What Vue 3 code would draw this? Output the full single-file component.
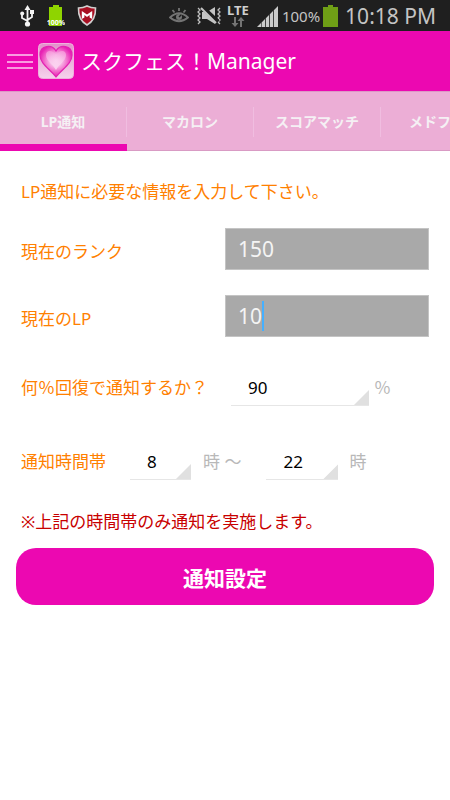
<script setup>
import { ref } from 'vue'

const tabs = ['LP通知', 'マカロン', 'スコアマッチ', 'メドフェス']
const activeTab = ref(0)

const rank = ref('150')
const lp = ref('10')
const percent = ref(90)
const fromHour = ref(8)
const toHour = ref(22)

const percents = [10, 20, 30, 40, 50, 60, 70, 80, 90, 100]
const hours = Array.from({ length: 25 }, (_, i) => i)
</script>

<template>
  <div class="app">
    <!-- status bar -->
    <div class="status">
      <div class="status-group status-left">
        <svg class="icon-usb" width="16" height="22" viewBox="0 0 16 22">
          <g fill="none" stroke="#f4f4f4" stroke-width="1.8">
            <path d="M8.5 4V18M8.5 16L3 13V9M8.5 15L13 12V8" />
          </g>
          <g fill="#f4f4f4">
            <path d="M8.5 0L11.5 5H5.5Z" />
            <circle cx="8.5" cy="19" r="2.6" />
            <circle cx="3.2" cy="8.5" r="2" />
            <rect x="11" y="5" width="4" height="4" />
          </g>
        </svg>
        <svg width="18" height="22" viewBox="0 0 18 22">
          <path d="M6 0H12V2H15V21H2V2H6Z" fill="#8fd400" />
          <text x="9" y="20" class="tiny">100%</text>
        </svg>
        <svg width="20" height="22" viewBox="0 0 20 22">
          <path d="M10 1Q14 3 18.5 3Q19 15 10 20Q1 15 1.5 3Q6 3 10 1Z" fill="#a80f22" stroke="#d0d0d0" stroke-width="1.6" />
          <path d="M4.8 14V6L10 9.5L15.2 6V14L12.6 12.5V10L10 12L7.4 10V12.5Z" fill="#fff" />
        </svg>
      </div>
      <div class="status-group status-right">
        <svg width="20" height="20" viewBox="0 0 20 20" fill="none" stroke="#747474" stroke-width="1.8">
          <path d="M1 11.5Q10 3 19 11.5Q10 19 1 11.5Z" />
          <circle cx="10" cy="11" r="3" fill="#747474" stroke="none" />
          <path d="M10 11L12 9" stroke="#1f1f1f" stroke-width="1.4" />
          <path d="M10 2V5M3.5 4L5.5 6.5M16.5 4L14.5 6.5" />
        </svg>
        <svg class="icon-mute" width="26" height="20" viewBox="0 0 26 20">
          <path d="M2 2L4 4L2 6L4 8L2 10L4 12L2 14L4 16L2 18M24 2L22 4L24 6L22 8L24 10L22 12L24 14L22 16L24 18" fill="none" stroke="#bdbdbd" stroke-width="1.3" />
          <path d="M6 6H11L19 1V18L11 13H6Z" fill="#c4c4c4" />
          <path d="M5 0L22 16" stroke="#1f1f1f" stroke-width="4.5" />
          <path d="M5 2L20 17" stroke="#c4c4c4" stroke-width="2" />
        </svg>
        <div class="network">
          <span class="lte">LTE</span>
          <svg width="14" height="10" viewBox="0 0 14 10" fill="#747474">
            <path d="M3 0H5V6H7.5L4 10L0.5 6H3ZM9 10H11V4H13.5L10 0L6.5 4H9Z" />
          </svg>
        </div>
        <svg class="icon-signal" width="22" height="22" viewBox="0 0 22 22" fill="#cacaca">
          <path d="M0 22L4 18V22ZM4.6 17.4L8 14V22H4.6ZM8.8 13.2L12 10V22H8.8ZM12.8 9.2L16 6V22H12.8ZM16.8 5.2L21 1V22H16.8Z" />
        </svg>
        <span class="charge">100%</span>
        <svg class="icon-battery" width="15" height="22" viewBox="0 0 15 22">
          <path d="M5 0H10V2H15V22H0V2H5Z" fill="#6f9f16" />
        </svg>
        <span class="clock">10:18 PM</span>
      </div>
    </div>

    <!-- header -->
    <header class="header">
      <button class="menu" type="button" aria-label="メニュー">
        <svg width="26" height="17" viewBox="0 0 26 17" fill="#f99ae0">
          <rect y="1" width="26" height="2" />
          <rect y="8" width="26" height="2" />
          <rect y="14" width="26" height="2" />
        </svg>
      </button>
      <svg class="logo" width="36" height="36" viewBox="0 0 36 36">
        <defs>
          <radialGradient id="heart" cx="50%" cy="46%" r="52%">
            <stop offset="0" stop-color="#fde8f8" />
            <stop offset="0.35" stop-color="#f8bce7" />
            <stop offset="0.75" stop-color="#f05cc6" />
            <stop offset="1" stop-color="#e822b4" />
          </radialGradient>
          <linearGradient id="tile" x1="0" y1="0" x2="0" y2="1">
            <stop offset="0" stop-color="#e38fcb" />
            <stop offset="1" stop-color="#f5d3ec" />
          </linearGradient>
          <linearGradient id="shine" x1="0" y1="0" x2="0" y2="1">
            <stop offset="0" stop-color="#f7a3df" />
            <stop offset="1" stop-color="#fdeaf8" />
          </linearGradient>
        </defs>
        <rect x="0.5" y="0.5" width="35" height="35" rx="4" fill="url(#tile)" stroke="#efb0dd" />
        <path d="M18 34C12 26 2 21 2 12C2 2 14 1 18 8C22 1 34 2 34 12C34 21 24 26 18 34Z" fill="url(#heart)" stroke="#e323b2" stroke-width="1.2" />
        <path d="M18 27C15 21 8 18 8 12C8 6 16 7 18 13C20 7 28 6 28 12C28 18 21 21 18 27Z" fill="url(#shine)" fill-opacity="0.7" />
      </svg>
      <h1 class="title">スクフェス！Manager</h1>
    </header>

    <!-- tabs -->
    <nav class="tabs">
      <button
        v-for="(tab, i) in tabs"
        :key="tab"
        type="button"
        class="tab"
        :class="{ 'tab--active': i === activeTab }"
        @click="activeTab = i"
      >
        <span class="tab-label">{{ tab }}</span>
      </button>
    </nav>

    <form class="form" @submit.prevent>
      <p class="intro">LP通知に必要な情報を入力して下さい。</p>

      <div class="row row-text">
        <label for="rank">現在のランク</label>
        <div class="field">
          <input id="rank" v-model="rank" type="text" inputmode="numeric" />
        </div>
      </div>

      <div class="row row-text">
        <label for="lp">現在のLP</label>
        <div class="field">
          <input id="lp" v-model="lp" type="text" inputmode="numeric" />
          <span class="caret"></span>
        </div>
      </div>

      <div class="row row-percent">
        <label for="percent">何％回復で通知するか？</label>
        <div class="spinner spinner-percent">
          <select id="percent" v-model="percent">
            <option v-for="p in percents" :key="p" :value="p">{{ p }}</option>
          </select>
        </div>
        <span class="unit">％</span>
      </div>

      <div class="row row-hours">
        <label for="from">通知時間帯</label>
        <div class="spinner spinner-from">
          <select id="from" v-model="fromHour">
            <option v-for="h in hours" :key="h" :value="h">{{ h }}</option>
          </select>
        </div>
        <label class="unit" for="from">時 ～</label>
        <div class="spinner spinner-to">
          <select id="to" v-model="toHour">
            <option v-for="h in hours" :key="h" :value="h">{{ h }}</option>
          </select>
        </div>
        <label class="unit" for="to">時</label>
      </div>

      <p class="note">※上記の時間帯のみ通知を実施します。</p>

      <button class="submit" type="submit">通知設定</button>
    </form>
  </div>
</template>

<style>
body {
  background: #fff;
}
</style>

<style scoped>
.app {
  overflow: hidden;
  font-family: "Noto Sans", "Noto Sans CJK JP", sans-serif;
  font-size: 17px;
  line-height: 22px;
}

button,
input,
select {
  font-family: inherit;
  margin: 0;
  border: 0;
}

/* status bar */
.status {
  display: flex;
  justify-content: space-between;
  height: 31px;
  padding: 0 14px 0 19px;
  background: #1f1f1f;
}

.status-group {
  display: flex;
  align-items: center;
}

.status-left {
  gap: 12px;
}

.tiny {
  font-size: 7px;
  font-weight: 700;
  fill: #fff;
  text-anchor: middle;
}

.icon-mute {
  margin-left: 7px;
}

.network {
  display: flex;
  flex-direction: column;
  align-items: center;
  margin: 0 8px 0 5px;
}

.lte {
  color: #cfcfcf;
  font-size: 13px;
  font-weight: 700;
  line-height: 13px;
}

.charge {
  margin: 0 3px;
  color: #c4c4c4;
  font-size: 15px;
}

.clock {
  margin-left: 7px;
  color: #c4c4c4;
  font-size: 21px;
}

/* header */
.header {
  display: flex;
  align-items: center;
  height: 60px;
  padding: 0 7px;
  background: #ec08b1;
}

.menu {
  display: flex;
  padding: 0;
  background: none;
}

.logo {
  margin: 0 7px 0 5px;
}

.title {
  margin: 0;
  color: #fff;
  font-size: 21px;
  font-weight: 400;
  line-height: 28px;
}

/* tabs */
.tabs {
  display: flex;
  height: 60px;
  box-sizing: border-box;
  overflow: hidden;
  background: #ecaed6;
  border-top: 1px solid #dc98c5;
  box-shadow: inset 0 -1px #d99bc4;
}

.tab {
  display: flex;
  flex: 0 0 127px;
  align-items: center;
  padding: 0;
  background: none;
  color: #f5f0f4;
  font-size: 14px;
  font-weight: 700;
}

.tab-label {
  flex: 1;
  line-height: 30px;
  border-right: 1px solid #f0bde0;
}

.tab--active {
  box-shadow: inset 0 -7px #ec08b1;
}

/* form */
.form {
  padding: 30px 21px 0;
}

.intro,
.row label {
  color: #ff8000;
}

.intro,
.note {
  margin: 0;
}

.row {
  display: flex;
  align-items: center;
}

.row-text {
  height: 42px;
  margin-top: 25px;
}

.row-text label {
  flex: 1;
  padding-top: 6px;
}

.field {
  position: relative;
  flex: 1;
}

.field input {
  display: block;
  width: 100%;
  height: 42px;
  box-sizing: border-box;
  padding: 0 12px;
  border: 1px solid #c4c4c4;
  background: #a9a9a9;
  color: #f4f4f4;
  font-size: 21px;
  outline: none;
}

/* text cursor after the entered LP */
.caret {
  position: absolute;
  top: 6px;
  left: 37px;
  width: 2px;
  height: 30px;
  background: #45b0ff;
}

.row-percent {
  height: 36px;
  margin-top: 33px;
}

.row-hours {
  height: 36px;
  margin-top: 38px;
}

.spinner {
  position: relative;
  border-bottom: 1px solid #e6e6e6;
}

.spinner::after {
  content: "";
  position: absolute;
  right: 0;
  bottom: 0;
  width: 15px;
  height: 15px;
  background: #e0e0e0;
  clip-path: polygon(100% 0, 100% 100%, 0 100%);
  pointer-events: none;
}

.spinner select {
  display: block;
  width: 100%;
  height: 35px;
  padding: 0 17px;
  appearance: none;
  background: none;
  color: #000;
  font-size: 17px;
}

.spinner-percent {
  width: 138px;
  margin: 0 5px 0 23px;
}

.spinner-from {
  width: 61px;
  margin: 0 12px 0 24px;
}

.spinner-to {
  width: 72px;
  margin: 0 11px 0 25px;
}

.row .unit {
  color: #b8b8b8;
}

.note {
  margin-top: 31px;
  color: #c80000;
}

.submit {
  display: block;
  width: calc(100% + 10px);
  height: 57px;
  margin: 15px -5px 0;
  border-radius: 20px;
  background: #ec08b1;
  color: #fff;
  font-size: 21px;
  font-weight: 700;
}
</style>
